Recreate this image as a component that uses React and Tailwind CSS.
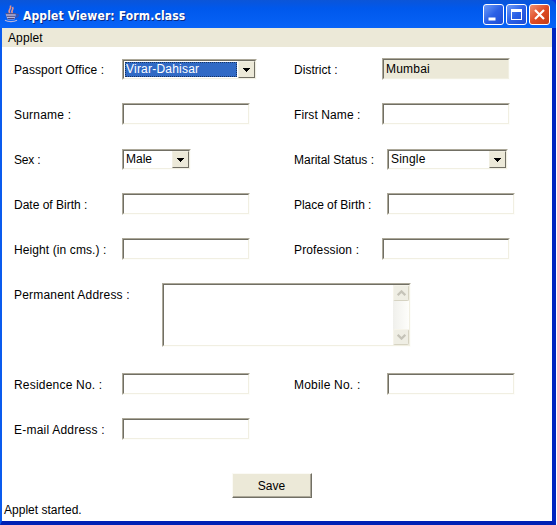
import React from "react";

const inset =
  "border border-t-[#aca899] border-l-[#aca899] border-r-[#fdfdfa] border-b-[#fdfdfa]";
const insetInner =
  "h-full w-full border border-t-[#716f64] border-l-[#716f64] border-r-[#f1efe2] border-b-[#f1efe2]";

function Label({ children, className = "" }) {
  return (
    <span className={`block h-[14px] shrink-0 whitespace-nowrap leading-[14px] ${className}`}>
      {children}
    </span>
  );
}

function TextField({ value, muted }) {
  return (
    <div className={`h-[22px] w-32 shrink-0 ${inset} ${muted ? "bg-[#ece9d8]" : "bg-white"}`}>
      <div className={`${insetInner} pl-[2px] pt-[2px] leading-[14px] tracking-[0.2px]`}>{value}</div>
    </div>
  );
}

function Choice({ value, width, focused, tracking }) {
  return (
    <div className={`mt-px h-[21px] shrink-0 bg-white ${width} ${inset}`}>
      <div className={`${insetInner} flex`}>
        <div
          className={`m-px min-w-0 flex-1 pl-px leading-[14px] ${tracking} ${
            focused ? "bg-[#316ac5] text-white outline-1 -outline-offset-1 outline-dotted outline-[#18345f]" : ""
          }`}
        >
          {value}
        </div>
        <div className="flex h-full w-[17px] items-center justify-center border border-t-[#f1efe2] border-l-[#f1efe2] border-r-[#716f64] border-b-[#716f64] bg-[#ece9d8]">
          <svg width="7" height="4" viewBox="0 0 7 4" shapeRendering="crispEdges">
            <path d="M0 0h7v1H6v1H5v1H4v1H3V3H2V2H1V1H0z" fill="#000" />
          </svg>
        </div>
      </div>
    </div>
  );
}

function Cell({ label, tracking, labelWidth, width, children }) {
  return (
    <div className={`flex ${width}`}>
      <div className={`${labelWidth} shrink-0 pt-[5px]`}>
        <Label className={tracking}>{label}</Label>
      </div>
      {children}
    </div>
  );
}

function ScrollButton({ up }) {
  return (
    <div className="flex h-[16px] w-[16px] items-center justify-center rounded-[2px] border border-[#f6f4ea] border-b-[#d6d3c2] border-r-[#d6d3c2] bg-[#efeee4]">
      <svg width="9" height="6" viewBox="0 0 9 6" fill="none" stroke="#c5c3b8" strokeWidth="2.2">
        <path d={up ? "M0.7 5.2L4.5 1.4L8.3 5.2" : "M0.7 0.8L4.5 4.6L8.3 0.8"} />
      </svg>
    </div>
  );
}

function CaptionButton({ close, children }) {
  return (
    <div
      className={`h-[21px] w-[21px] rounded-[3px] border border-white bg-linear-to-br ${
        close ? "from-[#f0906f] via-[#df4b24] to-[#c43c14]" : "from-[#6f9bf8] via-[#2b60e6] to-[#1d4cd4]"
      }`}
    >
      <svg width="19" height="19" viewBox="0 0 19 19">
        {children}
      </svg>
    </div>
  );
}

function JavaIcon() {
  return (
    <svg width="16" height="18" viewBox="0 0 16 18" fill="none">
      <path d="M6 8C3 5.5 7.5 4.5 6.5 0.5M8.5 8C6 6 10.5 4.5 8.5 2" stroke="#e0938f" strokeWidth="1.6" />
      <path d="M1.5 8.5h10.5l-1.5 6H3.5z" fill="#b4b9e0" />
      <path d="M1.5 8.8h10.5M2.5 11.2h8.5M3.5 13.5h7" stroke="#4a4276" strokeWidth="1.1" />
      <path d="M12 9.5c4-1 2.5 2.5-1 3" stroke="#4a529c" strokeWidth="1.2" />
      <path d="M1 15.3c3 1.8 9 1.8 12 0" stroke="#b5b3dd" strokeWidth="1.3" />
    </svg>
  );
}

export default function App() {
  return (
    <div className="h-[525px] w-[557px] overflow-hidden bg-white font-['Liberation_Sans',Arial,sans-serif] text-[12px] text-black">
      <div className="flex h-full w-[556px] flex-col bg-[#0831d9]">
        <header className="flex h-7 shrink-0 items-center rounded-tr-[6px] bg-linear-to-b from-[#0b55d8] via-[#0058ec] via-30% to-[#0863f7] pl-[4px] pr-[6px]">
          <JavaIcon />
          <h1 className="ml-[3px] flex-1 whitespace-nowrap pt-[3px] font-['DejaVu_Sans_Condensed','DejaVu_Sans',sans-serif] text-[12px] font-bold leading-4 tracking-[0.14px] text-white [text-shadow:1px_1px_0_#0a2a84]">
            Applet Viewer: Form.class
          </h1>
          <div className="flex gap-[2px] pt-px">
            <CaptionButton>
              <path d="M4.5 12.5h7v3h-7z" fill="#fff" />
            </CaptionButton>
            <CaptionButton>
              <path d="M4 4h11v11H4zM5 7v7h9V7z" fill="#fff" fillRule="evenodd" />
            </CaptionButton>
            <CaptionButton close>
              <path d="M5 5l9 9M14 5l-9 9" stroke="#fff" strokeWidth="2.2" />
            </CaptionButton>
          </div>
        </header>

        <div className="flex min-h-0 flex-1 border-b-4 border-l-2 border-r-4 border-b-[#0020b4] border-l-[#0a5bee] border-r-[#0025c0]">
          <main className="flex w-[550px] flex-col bg-white">
            <nav className="h-[19px] shrink-0 bg-[#ece9d8] pl-[6px] pt-[3px]">
              <Label className="tracking-[0.1px]">Applet</Label>
            </nav>

            <form className="flex flex-col pl-3 pt-[11px]">
              <div className="flex h-[45px]">
                <Cell label="Passport Office :" tracking="tracking-[0.1px]" labelWidth="w-[108px]" width="w-[280px]">
                  <Choice value="Virar-Dahisar" width="w-[135px]" focused tracking="tracking-[0.22px]" />
                </Cell>
                <Cell label="District :" tracking="tracking-[0.04px]" labelWidth="w-[88px]">
                  <TextField value="Mumbai" muted />
                </Cell>
              </div>
              <div className="flex h-[45px]">
                <Cell label="Surname :" tracking="tracking-[0.2px]" labelWidth="w-[108px]" width="w-[280px]">
                  <TextField />
                </Cell>
                <Cell label="First Name :" tracking="tracking-[0.1px]" labelWidth="w-[88px]">
                  <TextField />
                </Cell>
              </div>
              <div className="flex h-[45px]">
                <Cell label="Sex :" tracking="tracking-[-0.2px]" labelWidth="w-[108px]" width="w-[280px]">
                  <Choice value="Male" width="w-[69px]" tracking="tracking-[0px]" />
                </Cell>
                <Cell label="Marital Status :" tracking="tracking-[0px]" labelWidth="w-[93px]">
                  <Choice value="Single" width="w-[121px]" tracking="tracking-[0.2px]" />
                </Cell>
              </div>
              <div className="flex h-[45px]">
                <Cell label="Date of Birth :" tracking="tracking-[0px]" labelWidth="w-[108px]" width="w-[280px]">
                  <TextField />
                </Cell>
                <Cell label="Place of Birth :" tracking="tracking-[-0.04px]" labelWidth="w-[93px]">
                  <TextField />
                </Cell>
              </div>
              <div className="flex h-[45px]">
                <Cell label="Height (in cms.) :" tracking="tracking-[0.1px]" labelWidth="w-[108px]" width="w-[280px]">
                  <TextField />
                </Cell>
                <Cell label="Profession :" tracking="tracking-[0.15px]" labelWidth="w-[88px]">
                  <TextField />
                </Cell>
              </div>
              <div className="flex h-[90px]">
                <Cell label="Permanent Address :" tracking="tracking-[0.2px]" labelWidth="w-[148px]">
                  <div className={`h-[64px] w-[249px] shrink-0 ${inset}`}>
                    <div className={`${insetInner} flex justify-end`}>
                      <div className="flex w-[16px] flex-col justify-between bg-linear-to-r from-[#f0f0ec] to-[#fefefb]">
                        <ScrollButton up />
                        <ScrollButton />
                      </div>
                    </div>
                  </div>
                </Cell>
              </div>
              <div className="flex h-[45px]">
                <Cell label="Residence No. :" tracking="tracking-[0.2px]" labelWidth="w-[108px]" width="w-[280px]">
                  <TextField />
                </Cell>
                <Cell label="Mobile No. :" tracking="tracking-[0.2px]" labelWidth="w-[93px]">
                  <TextField />
                </Cell>
              </div>
              <div className="flex h-[55px]">
                <Cell label="E-mail Address :" tracking="tracking-[0.22px]" labelWidth="w-[108px]" width="w-[280px]">
                  <TextField />
                </Cell>
              </div>
              <button
                type="button"
                className="ml-[218px] h-[25px] w-[80px] border border-t-[#fbfaf5] border-l-[#fbfaf5] border-r-[#716f64] border-b-[#716f64] bg-[#ece9d8] pr-px leading-[14px] tracking-[0px] shadow-[inset_-1px_-1px_0_#aca899]"
              >
                Save
              </button>
            </form>
            <footer className="pl-[2px] pt-[5px]">
              <Label className="tracking-[0.02px]">Applet started.</Label>
            </footer>
          </main>
        </div>
      </div>
    </div>
  );
}
